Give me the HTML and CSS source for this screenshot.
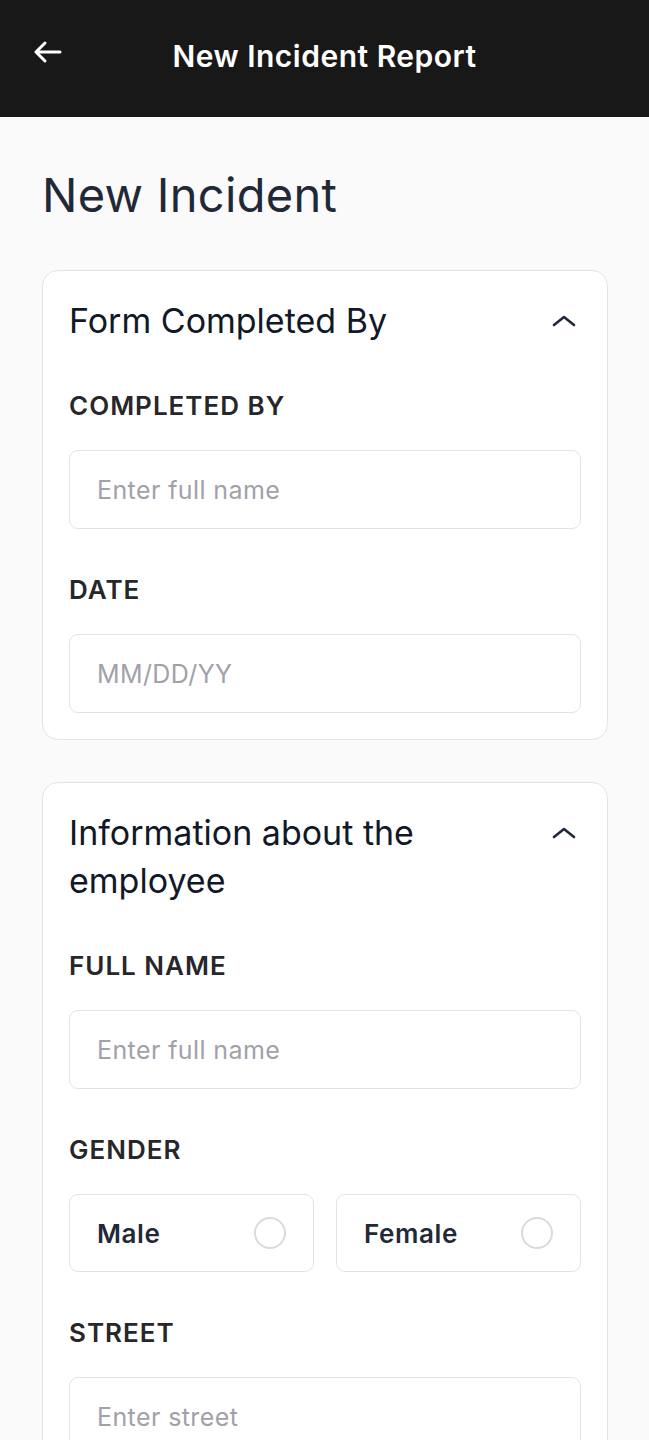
FILE: index.html
```html
<!DOCTYPE html>
<html lang="en">
<head>
<meta charset="utf-8">
<title>New Incident Report</title>
<link rel="stylesheet" href="styles.css">
</head>
<body>
<header class="appbar">
  <button class="back" aria-label="Back">
    <svg width="30" height="24" viewBox="0 0 30 24" fill="none" stroke="#ffffff" stroke-width="3" stroke-linecap="round" stroke-linejoin="round"><path d="M27 12H3M12 3L3 12l9 9"/></svg>
  </button>
  <h1 class="appbar-title">New Incident Report</h1>
</header>
<main class="page">
  <h2 class="page-title">New Incident</h2>

  <section class="card">
    <div class="card-head">
      <h3 class="card-title">Form Completed By</h3>
      <svg class="chev" width="24" height="12" viewBox="0 0 24 12" fill="none" stroke="#1f2937" stroke-width="2.6" stroke-linecap="round" stroke-linejoin="round"><path d="M2 10l10-8 10 8"/></svg>
    </div>
    <div class="field">
      <label class="label">COMPLETED BY</label>
      <div class="input"><span class="ph">Enter full name</span></div>
    </div>
    <div class="field">
      <label class="label">DATE</label>
      <div class="input"><span class="ph">MM/DD/YY</span></div>
    </div>
  </section>

  <section class="card">
    <div class="card-head">
      <h3 class="card-title">Information about the employee</h3>
      <svg class="chev" width="24" height="12" viewBox="0 0 24 12" fill="none" stroke="#1f2937" stroke-width="2.6" stroke-linecap="round" stroke-linejoin="round"><path d="M2 10l10-8 10 8"/></svg>
    </div>
    <div class="field">
      <label class="label">FULL NAME</label>
      <div class="input"><span class="ph">Enter full name</span></div>
    </div>
    <div class="field">
      <label class="label">GENDER</label>
      <div class="radios">
        <div class="radio"><span class="radio-text">Male</span><span class="dot"></span></div>
        <div class="radio"><span class="radio-text">Female</span><span class="dot"></span></div>
      </div>
    </div>
    <div class="field">
      <label class="label">STREET</label>
      <div class="input"><span class="ph">Enter street</span></div>
    </div>
  </section>
</main>
</body>
</html>
```

FILE: styles.css
```css
* { box-sizing: border-box; }
html, body { margin: 0; padding: 0; }
body {
  width: 649px;
  background: #fafafa;
  font-family: Inter, "Noto Sans", "Liberation Sans", sans-serif;
  color: #1f2937;
}
.appbar {
  height: 117px;
  background: #181818;
  display: flex;
  align-items: center;
  justify-content: center;
  position: relative;
  padding-bottom: 6px;
}
.back {
  position: absolute;
  left: 33px;
  top: 38px;
  background: none;
  border: 0;
  padding: 0;
  width: 32px;
  height: 28px;
  display: flex;
  align-items: center;
}
.appbar-title {
  margin: 0;
  color: #ffffff;
  font-size: 30px;
  font-weight: 600;
  letter-spacing: 0.5px;
}
.page {
  padding: 50px 41px 0 42px;
}
.page-title {
  margin: 0 0 48px 0;
  font-size: 47px;
  line-height: 55px;
  font-weight: 400;
  letter-spacing: 0.3px;
  color: #1f2937;
}
.card {
  background: #ffffff;
  border: 1px solid #e3e4e7;
  border-radius: 16px;
  padding: 26px;
  margin-bottom: 42px;
  display: flex;
  flex-direction: column;
  gap: 43px;
}
.card-head {
  display: flex;
  align-items: flex-start;
  justify-content: space-between;
  gap: 20px;
}
.card-title {
  margin: 0;
  font-size: 34px;
  line-height: 48px;
  font-weight: 400;
  color: #111827;
  max-width: 400px;
}
.chev {
  margin-top: 18px;
  margin-right: 5px;
  flex: none;
}
.field {
  display: flex;
  flex-direction: column;
  gap: 26px;
}
.label {
  font-size: 26px;
  line-height: 36px;
  font-weight: 600;
  letter-spacing: 1px;
  color: #27272a;
}
.input {
  height: 79px;
  border: 1.5px solid #e2e3e6;
  border-radius: 9px;
  background: #ffffff;
  display: flex;
  align-items: center;
  padding-left: 27px;
}
.ph {
  font-size: 25px;
  letter-spacing: 0.4px;
  color: #a1a1aa;
}
.radios {
  display: grid;
  grid-template-columns: 1fr 1fr;
  gap: 22px;
}
.radio {
  height: 78px;
  border: 1.5px solid #e2e3e6;
  border-radius: 9px;
  background: #ffffff;
  display: flex;
  align-items: center;
  justify-content: space-between;
  padding: 0 27px;
}
.radio-text {
  font-size: 26px;
  font-weight: 600;
  letter-spacing: 0.6px;
  color: #1f2937;
}
.dot {
  width: 32px;
  height: 32px;
  border-radius: 50%;
  border: 2px solid #d9dadd;
}
```
